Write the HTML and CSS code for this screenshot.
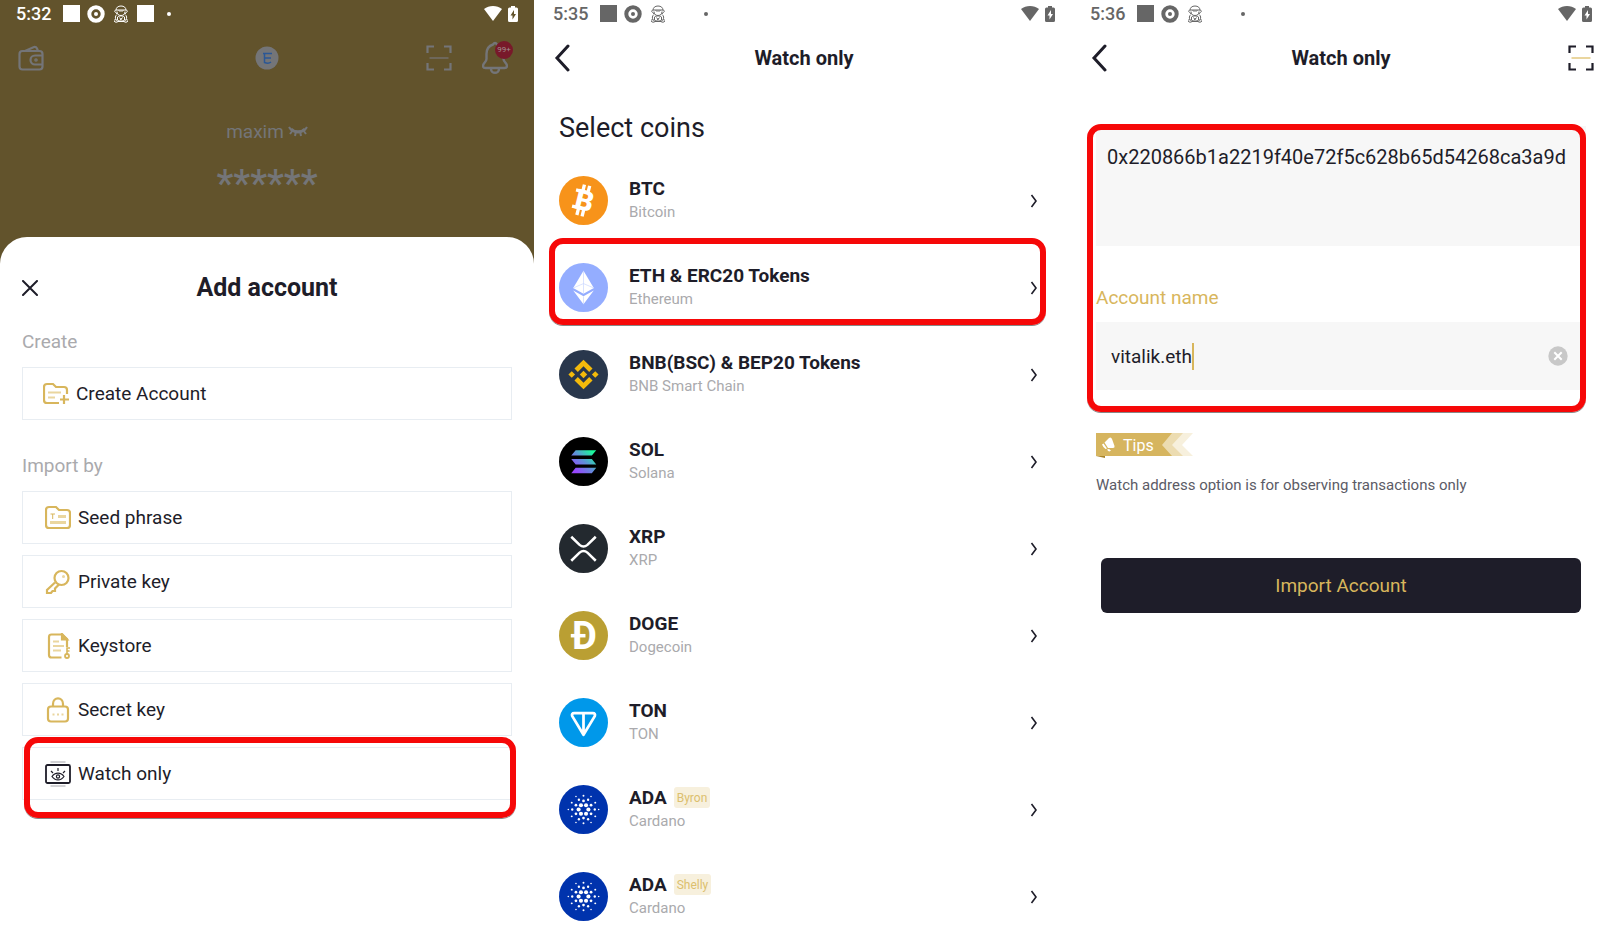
FILE: index.html
```html
<!DOCTYPE html>
<html lang="en">

<head>
    <meta charset="UTF-8">
    <meta name="viewport" content="width=device-width, initial-scale=1.0">
    <title>Watch only wallet</title>
    <link rel="stylesheet" href="styles.css">
</head>

<body>
    <!-- Shared icons -->
    <svg class="sprite" aria-hidden="true">
        <symbol id="i-ring" viewBox="0 0 18 18">
            <circle cx="9" cy="9" r="6.7" fill="none" stroke="currentColor" stroke-width="4" />
            <circle cx="9" cy="9" r="2" fill="currentColor" />
        </symbol>
        <symbol id="i-bear" viewBox="0 0 16 18">
            <g fill="none" stroke="currentColor" stroke-width="1">
                <path d="M3 5.500C3 2.500 5 1 8 1s5 1.500 5 4.500M1.500 6.500c0-1 1-1.500 2-1.500h9c1 0 2 .5 2 1.500M4 6.500C4 9 5.500 10.500 8 10.500S12 9 12 6.500M5.500 5l1.500 1.500 1-1 1 1L10.500 5M2 6.500l2 2.500M14 6.500L12 9" />
                <path d="M4 9.500C2 11 2 13 3 14.500M12 9.500c2 1.500 2 3.500 1 5M4.500 12c1-1.500 6-1.500 7 0v3c-1 1.500-6 1.500-7 0zM1 15.500c1-1.500 3-1 3.500 1M15 15.500c-1-1.500-3-1-3.500 1M1 16c1 1.500 3 1.500 4 .5h6c1 1 3 1 4-.5M6.500 12.500l1.500 2 1.500-2M7 15l2-1.500" />
            </g>
        </symbol>
        <symbol id="i-wifi" viewBox="0 0 18 15">
            <path d="M0 3C5-1 13-1 18 3L9 15z" fill="currentColor" />
        </symbol>
        <symbol id="i-battery" viewBox="0 0 10 16">
            <path d="M3 0h4v1.500h1.500Q10 1.500 10 3v11.500Q10 16 8.500 16h-7Q0 16 0 14.500V3q0-1.500 1.500-1.500H3z" fill="currentColor" />
            <path class="bolt" d="M6 4L2.500 9.500h2V13.500L8 8H6z" />
        </symbol>
        <symbol id="i-back" viewBox="0 0 16 28">
            <path d="M14 2L3 14l11 12" fill="none" stroke="currentColor" stroke-width="3" stroke-linecap="round" />
        </symbol>
        <symbol id="i-next" viewBox="0 0 8 14">
            <path d="M1.500 1l4.500 6-4.500 6" fill="none" stroke="currentColor" stroke-width="1.600" />
        </symbol>
        <symbol id="i-scan" viewBox="0 0 26 26">
            <path d="M1.500 8V1.500H8M18 1.500h6.500V8M24.500 18v6.500H18M8 24.500H1.500V18" fill="none" stroke="currentColor" stroke-width="2.200" />
            <path class="scan-line" d="M3.500 13h19" />
        </symbol>
        <symbol id="i-ada" viewBox="0 0 50 50">
            <circle cx="25" cy="25" r="25" fill="#0033ad" />
            <g fill="#fff">
                <circle cx="20" cy="25" r="2.100" /><circle cx="30" cy="25" r="2.100" />
                <circle cx="22.400" cy="20.600" r="2.100" /><circle cx="27.600" cy="20.600" r="2.100" />
                <circle cx="22.400" cy="29.400" r="2.100" /><circle cx="27.600" cy="29.400" r="2.100" />
                <circle cx="25" cy="16.200" r="1.400" /><circle cx="25" cy="33.800" r="1.400" />
                <circle cx="17.300" cy="20.600" r="1.400" /><circle cx="32.700" cy="20.600" r="1.400" />
                <circle cx="17.300" cy="29.400" r="1.400" /><circle cx="32.700" cy="29.400" r="1.400" />
                <circle cx="20.300" cy="15" r="1.200" /><circle cx="29.700" cy="15" r="1.200" />
                <circle cx="20.300" cy="35" r="1.200" /><circle cx="29.700" cy="35" r="1.200" />
                <circle cx="13.500" cy="25" r="1.200" /><circle cx="36.500" cy="25" r="1.200" />
                <circle cx="25" cy="11" r="1" /><circle cx="25" cy="39" r="1" />
                <circle cx="13" cy="18" r="1" /><circle cx="37" cy="18" r="1" />
                <circle cx="13" cy="32" r="1" /><circle cx="37" cy="32" r="1" />
                <circle cx="17.300" cy="11.800" r=".8" /><circle cx="32.700" cy="11.800" r=".8" />
                <circle cx="17.300" cy="38.200" r=".8" /><circle cx="32.700" cy="38.200" r=".8" />
                <circle cx="9.500" cy="25" r=".8" /><circle cx="40.500" cy="25" r=".8" />
            </g>
        </symbol>
    </svg>

    <main class="screens">
        <!-- Add account sheet -->
        <section class="screen home">
            <div class="status">
                <span class="time">5:32</span>
                <i class="block"></i>
                <svg class="ring"><use href="#i-ring" /></svg>
                <svg class="bear"><use href="#i-bear" /></svg>
                <i class="block extra"></i>
                <i class="dot"></i>
                <svg class="wifi"><use href="#i-wifi" /></svg>
                <svg class="battery"><use href="#i-battery" /></svg>
            </div>
            <div class="home-bar">
                <button class="icon-btn" aria-label="Wallets">
                    <svg width="26" height="26" viewBox="0 0 26 26" fill="none" stroke="currentColor" stroke-width="2.200">
                        <rect x="1.500" y="6" width="23" height="18.500" rx="3" />
                        <path d="M7 6l9-4q2-.5 3 1.500L20 6M24.500 10.500H17a4 4 0 0 0 0 9h7.500" />
                        <circle cx="18" cy="15" r=".7" />
                    </svg>
                </button>
                <svg class="chain" width="24" height="24" viewBox="0 0 24 24">
                    <circle cx="12" cy="12" r="11.500" fill="#747578" />
                    <path d="M8 7.500h9M9.500 8v8.500q4 1.500 6.500-.5M9 12h7" fill="none" stroke="#2a5796" stroke-width="1.500" />
                </svg>
                <div class="home-actions">
                    <button class="icon-btn" aria-label="Scan"><svg width="26" height="26"><use href="#i-scan" /></svg></button>
                    <button class="icon-btn bell" aria-label="Notifications">
                        <svg width="26" height="34" viewBox="0 0 26 34" fill="none" stroke="currentColor" stroke-width="2.400">
                            <path d="M11 3.500q2-3 4 0C20 5 21.500 9 21.500 13v5c0 3 3.500 4 3.500 7 0 1.500-1 2-2.500 2h-19C2 27 1 26.500 1 25c0-3 3.500-4 3.500-7v-5c0-4 1.500-8 6.500-9.500zM9 28c0 5 8 5 8 0" />
                        </svg>
                        <span class="count">99+</span>
                    </button>
                </div>
            </div>
            <div class="owner">
                <span>maxim</span>
                <svg width="20" height="12" viewBox="0 0 20 12" fill="none" stroke="currentColor" stroke-width="2">
                    <path d="M1 1c3 6 15 6 18 0M5 4L2 8M8 5l-1 5M12 5l1 5M15 4l3 4" />
                    <path d="M3 3c4 4 10 4 14 0" stroke-width="3" />
                </svg>
            </div>
            <div class="balance">******</div>

            <div class="sheet">
                <div class="sheet-head">
                    <button class="icon-btn" aria-label="Close">
                        <svg width="16" height="16" viewBox="0 0 16 16"><path d="M1 1l14 14M15 1L1 15" stroke="currentColor" stroke-width="2" stroke-linecap="round" /></svg>
                    </button>
                    <h2>Add account</h2>
                </div>
                <h3>Create</h3>
                <button class="option create">
                    <svg class="option-icon" viewBox="0 0 26 26" fill="none" stroke="currentColor" stroke-width="2.200">
                        <path d="M16 22H4q-3 0-3-3V6q0-3 3-3h6l3 3h8q3 0 3 3v4M21 14v9M17 18.500h9" />
                        <path class="soft" d="M5 11.500h13M5 16.500h7" />
                    </svg>
                    Create Account
                </button>
                <h3>Import by</h3>
                <div class="options">
                    <button class="option">
                        <svg class="option-icon" viewBox="0 0 26 26" fill="none" stroke="currentColor" stroke-width="2.200">
                            <path d="M4 2h7l3 3h8q3 0 3 3v12q0 3-3 3H4q-3 0-3-3V5q0-3 3-3z" />
                            <path class="soft" d="M13 11.500h8M5 17.500h16" stroke-width="2.800" />
                            <path d="M5.500 9h4.500M7.700 9v5" stroke-width="1" />
                        </svg>
                        Seed phrase
                    </button>
                    <button class="option">
                        <svg class="option-icon" viewBox="0 0 26 26" fill="none" stroke="currentColor" stroke-width="2.200">
                            <circle cx="16.500" cy="9" r="7" />
                            <path d="M10 13.500l-8 7.500V24h4l1.500-2H10v-2.500l4-4" />
                            <circle class="dim" cx="18.500" cy="7.500" r="1.500" />
                        </svg>
                        Private key
                    </button>
                    <button class="option">
                        <svg class="option-icon" viewBox="0 0 26 26" fill="none" stroke="currentColor" stroke-width="2.200">
                            <path d="M16.500 24.500H6.500q-2.500 0-2.500-2.500V4q0-2.500 2.500-2.500H17L22 6v8" />
                            <path d="M17 1v5.500h5z" fill="currentColor" />
                            <path class="soft" d="M8 8.500h6M8 13h11M8 17.500h8" />
                            <path d="M22 22v-7h3M22 18h2.500" stroke-width="1.600" />
                            <circle cx="22" cy="23" r="2" stroke-width="1.800" />
                        </svg>
                        Keystore
                    </button>
                    <button class="option">
                        <svg class="option-icon" viewBox="0 0 26 26" fill="none" stroke="currentColor" stroke-width="2.200">
                            <rect x="3" y="9.500" width="20" height="15" rx="3" />
                            <path d="M8 9.500V7c0-7.500 10-7.500 10 0v2.500" />
                            <path class="soft" d="M7.500 17.500h2M12 17.500h2M16.500 17.500h2" />
                        </svg>
                        Secret key
                    </button>
                    <button class="option marked">
                        <svg class="option-icon ink" viewBox="0 0 26 26" fill="none" stroke="currentColor" stroke-width="1.800">
                            <rect x="1" y="4" width="24" height="18" rx="1.500" />
                            <path d="M5.500 1h15M5.500 25h15" stroke="#c3c3c8" stroke-width="1.500" />
                            <path d="M7 15.500c3-4.500 9-4.500 12 0-3 4.500-9 4.500-12 0zM13 7v3M6 10l2 2M20 10l-2 2" stroke-width="1.200" />
                            <circle cx="13" cy="15.500" r="1.600" stroke-width="1.200" />
                        </svg>
                        Watch only
                    </button>
                </div>
            </div>
        </section>

        <!-- Coin list -->
        <section class="screen">
            <div class="status">
                <span class="time">5:35</span>
                <i class="block"></i>
                <svg class="ring"><use href="#i-ring" /></svg>
                <svg class="bear"><use href="#i-bear" /></svg>
                <i class="block extra"></i>
                <i class="dot"></i>
                <svg class="wifi"><use href="#i-wifi" /></svg>
                <svg class="battery"><use href="#i-battery" /></svg>
            </div>
            <header class="nav">
                <button class="icon-btn back" aria-label="Back"><svg width="16" height="28"><use href="#i-back" /></svg></button>
                <h1>Watch only</h1>
            </header>
            <h2 class="select-title">Select coins</h2>
            <div class="coins">
                <button class="coin">
                    <svg class="logo" viewBox="0 0 50 50">
                        <circle cx="25" cy="25" r="25" fill="#f7931a" />
                        <g transform="rotate(14 25 25)">
                            <text class="mark" x="26" y="35" font-size="29" text-anchor="middle">B</text>
                            <path d="M22 9v6M27.500 9v6M22 34v7M27.500 34v7M15 16.300h5M15 33.300h5" stroke="#fff" stroke-width="3.400" />
                        </g>
                    </svg>
                    <span class="coin-text"><b>BTC</b><small>Bitcoin</small></span>
                    <svg class="next"><use href="#i-next" /></svg>
                </button>
                <button class="coin marked">
                    <svg class="logo" viewBox="0 0 50 50">
                        <circle cx="25" cy="25" r="25" fill="#94adff" />
                        <path d="M25 8l10.500 17.500L25 31.500l-10.500-6z" fill="#fff" />
                        <path d="M14.500 28L25 34l10.500-6L25 42z" fill="#fff" />
                        <path d="M25 8v23.500M25 34v8M14.500 25.500L25 21l10.500 4.500" fill="none" stroke="#c9d6ff" stroke-width=".7" />
                    </svg>
                    <span class="coin-text"><b>ETH &amp; ERC20 Tokens</b><small>Ethereum</small></span>
                    <svg class="next"><use href="#i-next" /></svg>
                </button>
                <button class="coin">
                    <svg class="logo" viewBox="0 0 50 50">
                        <circle cx="25" cy="25" r="25" fill="#29374c" />
                        <path d="M25 10l9.200 9-3.400 3.400-5.800-5.700-5.800 5.700-3.400-3.400zM25 40l9.200-9-3.400-3.400-5.800 5.700-5.800-5.700-3.400 3.400zM13 21.600l3.400 3.400-3.400 3.400L9.600 25zM37 21.600l3.400 3.400-3.400 3.400-3.400-3.400zM25 21.200l3.800 3.800-3.800 3.800-3.800-3.800z" fill="#f3ba0b" />
                    </svg>
                    <span class="coin-text"><b>BNB(BSC) &amp; BEP20 Tokens</b><small>BNB Smart Chain</small></span>
                    <svg class="next"><use href="#i-next" /></svg>
                </button>
                <button class="coin">
                    <svg class="logo" viewBox="0 0 50 50">
                        <defs>
                            <linearGradient id="sol" gradientUnits="userSpaceOnUse" x1="14" y1="37" x2="37" y2="13">
                                <stop offset="0.100" stop-color="#9945ff" />
                                <stop offset="0.500" stop-color="#5f90d8" />
                                <stop offset="0.900" stop-color="#19fb9b" />
                            </linearGradient>
                        </defs>
                        <circle cx="25" cy="25" r="25" fill="#000" />
                        <path d="M17 13.500h21L33.500 19h-21zM12.500 22.500h21L38 28H17zM17 31.500h21L33.500 37h-21z" fill="url(#sol)" />
                    </svg>
                    <span class="coin-text"><b>SOL</b><small>Solana</small></span>
                    <svg class="next"><use href="#i-next" /></svg>
                </button>
                <button class="coin">
                    <svg class="logo" viewBox="0 0 50 50">
                        <circle cx="25" cy="25" r="25" fill="#23292f" />
                        <path d="M12.500 13l8.500 8.300q4 3.400 8 0L37.500 13M12.500 37.500l8.500-8.300q4-3.400 8 0l8.500 8.300" fill="none" stroke="#fff" stroke-width="2.600" />
                    </svg>
                    <span class="coin-text"><b>XRP</b><small>XRP</small></span>
                    <svg class="next"><use href="#i-next" /></svg>
                </button>
                <button class="coin">
                    <svg class="logo" viewBox="0 0 50 50">
                        <circle cx="25" cy="25" r="25" fill="#ba9f33" />
                        <text class="mark doge" x="26" y="39" font-size="39" text-anchor="middle">D</text>
                        <path d="M12 25.200h15" stroke="#fff" stroke-width="3.600" />
                    </svg>
                    <span class="coin-text"><b>DOGE</b><small>Dogecoin</small></span>
                    <svg class="next"><use href="#i-next" /></svg>
                </button>
                <button class="coin">
                    <svg class="logo" viewBox="0 0 50 50">
                        <circle cx="25" cy="25" r="25" fill="#0098ea" />
                        <path d="M15.500 15.500h19q3 0 2 3L25 37.500 13.500 18.500q-1-3 2-3zM25 16v20" fill="none" stroke="#fff" stroke-width="2.800" stroke-linejoin="round" />
                    </svg>
                    <span class="coin-text"><b>TON</b><small>TON</small></span>
                    <svg class="next"><use href="#i-next" /></svg>
                </button>
                <button class="coin">
                    <svg class="logo"><use href="#i-ada" /></svg>
                    <span class="coin-text"><b>ADA <em>Byron</em></b><small>Cardano</small></span>
                    <svg class="next"><use href="#i-next" /></svg>
                </button>
                <button class="coin">
                    <svg class="logo"><use href="#i-ada" /></svg>
                    <span class="coin-text"><b>ADA <em>Shelly</em></b><small>Cardano</small></span>
                    <svg class="next"><use href="#i-next" /></svg>
                </button>
            </div>
        </section>

        <!-- Import form -->
        <section class="screen">
            <div class="status">
                <span class="time">5:36</span>
                <i class="block"></i>
                <svg class="ring"><use href="#i-ring" /></svg>
                <svg class="bear"><use href="#i-bear" /></svg>
                <i class="block extra"></i>
                <i class="dot"></i>
                <svg class="wifi"><use href="#i-wifi" /></svg>
                <svg class="battery"><use href="#i-battery" /></svg>
            </div>
            <header class="nav">
                <button class="icon-btn back" aria-label="Back"><svg width="16" height="28"><use href="#i-back" /></svg></button>
                <h1>Watch only</h1>
                <button class="icon-btn scan" aria-label="Scan"><svg width="26" height="26"><use href="#i-scan" /></svg></button>
            </header>
            <form class="import-form">
                <div class="fields marked">
                    <textarea class="address" aria-label="Address" spellcheck="false">0x220866b1a2219f40e72f5c628b65d54268ca3a9d</textarea>
                    <label for="account-name">Account name</label>
                    <div class="name-field">
                        <input type="text" id="account-name" value="vitalik.eth">
                        <span class="caret"></span>
                        <button type="button" class="icon-btn clear" aria-label="Clear">
                            <svg width="20" height="20" viewBox="0 0 20 20"><circle cx="10" cy="10" r="9.700" fill="#c8c8c8" /><path d="M6.300 6.300l7.400 7.400M13.700 6.300l-7.400 7.400" stroke="#fff" stroke-width="2" /></svg>
                        </button>
                    </div>
                </div>
                <div class="tips">
                    <svg width="98" height="26" viewBox="0 0 98 26">
                        <path d="M0 0h97L86 12l11 11H0z" fill="#f7f0dd" />
                        <path d="M0 0h87L76 12l11 11H0z" fill="#ecdcb1" />
                        <path d="M0 0h76L66 12l10 11H0z" fill="#d6b55f" />
                        <path d="M0 23h9v2z" fill="#a8842c" />
                        <path d="M8.500 9.500L13 5q2-1.500 3 1l2.500 7q.5 2-1.500 2h-5zM6 11.500l1.500-1 3.500 5-1.500.5q-2-1-3.500-4.500zM11 16.500l2-.5 2 1.500-1.500 1q-1.500 0-2.500-2z" fill="#fff" />
                    </svg>
                    <span>Tips</span>
                </div>
                <p class="hint">Watch address option is for observing transactions only</p>
                <button type="button" class="submit">Import Account</button>
            </form>
        </section>
    </main>
</body>

</html>
```
FILE: styles.css
```css
* {
    margin: 0;
    padding: 0;
    box-sizing: border-box;
}

body {
    font-family: Roboto, "Liberation Sans", sans-serif;
    font-size: 19px;
    color: #1e1d29;
    background-color: #fff;
    overflow-x: hidden;
}

button,
input,
textarea {
    font: inherit;
    color: inherit;
    border: none;
    background: none;
}

button {
    cursor: pointer;
}

svg {
    display: block;
    flex: none;
}

.sprite {
    position: absolute;
    width: 0;
    height: 0;
}

/* Three phones side by side, the last one runs off the edge a little */
.screens {
    display: grid;
    grid-template-columns: repeat(3, 1fr);
    gap: 3px;
    width: calc(100% + 6px);
    min-height: 100vh;
}

.screen {
    --bolt: #fff;
    --scan-line: #ead69f;
    display: flex;
    flex-direction: column;
}

/* Status bar */
.status {
    display: flex;
    align-items: center;
    height: 27px;
    padding: 0 16px;
    color: #666;
}

.time {
    width: 47px;
    font-size: 18px;
    font-weight: 500;
    line-height: 20px;
}

.block {
    width: 17px;
    height: 17px;
    background-color: currentColor;
}

.block.extra {
    margin-left: 8px;
    background-color: #fff;
}

.ring {
    width: 18px;
    height: 18px;
    margin-left: 7px;
}

.bear {
    width: 16px;
    height: 18px;
    margin-left: 8px;
}

.dot {
    width: 4px;
    height: 4px;
    margin-left: 13px;
    border-radius: 50%;
    background-color: currentColor;
}

.wifi {
    width: 18px;
    height: 15px;
    margin-left: auto;
}

.battery {
    width: 10px;
    height: 16px;
    margin-left: 6px;
}

.bolt {
    fill: var(--bolt);
}

.scan-line {
    stroke: var(--scan-line);
    stroke-width: 2;
}

.icon-btn {
    display: block;
    color: inherit;
}

/* Home screen behind the sheet */
.home {
    --bolt: #62532c;
    --scan-line: #6e675a;
    background-color: #62532c;
    color: #747578;
}

.home .status {
    color: #fff;
}

.home-bar {
    display: grid;
    grid-template-columns: 1fr auto 1fr;
    align-items: center;
    height: 62px;
    padding: 0 18px;
}

.home-actions {
    display: flex;
    align-items: center;
    justify-content: flex-end;
    gap: 30px;
    padding-right: 8px;
}

.bell {
    position: relative;
}

.count {
    position: absolute;
    top: 0;
    right: -5px;
    width: 18px;
    height: 18px;
    border-radius: 50%;
    background-color: #78192a;
    color: #a09090;
    font-size: 8px;
    line-height: 17px;
    text-align: center;
}

.owner {
    display: flex;
    align-items: center;
    justify-content: center;
    gap: 4px;
    margin-top: 31px;
    line-height: 24px;
}

.balance {
    height: 93px;
    font-size: 38px;
    font-weight: 500;
    line-height: 80px;
    text-align: center;
}

.sheet {
    flex: 1;
    padding: 36px 22px 40px;
    border-radius: 27px 27px 0 0;
    background-color: #fff;
    color: #1e1d29;
}

.sheet-head {
    display: grid;
    grid-template-columns: 1fr auto 1fr;
    align-items: center;
}

.sheet h2 {
    font-size: 25px;
    font-weight: 700;
    line-height: 30px;
}

.sheet h3 {
    margin: 27px 0 13px;
    font-size: 19px;
    font-weight: 400;
    line-height: 24px;
    color: #aaaaad;
}

.options {
    display: grid;
    gap: 11px;
}

.option {
    display: flex;
    align-items: center;
    gap: 7px;
    width: 100%;
    height: 53px;
    padding: 0 22px;
    border: 1px solid #e8edf2;
}

.create {
    margin-bottom: 34px;
    padding: 0 20px;
}

.option-icon {
    width: 26px;
    height: 26px;
    color: #d8b65c;
}

.option-icon.ink {
    color: #1e1d29;
}

.soft {
    stroke: #ead69f;
}

.dim {
    fill: #ead69f;
    stroke: none;
}

/* Red frame round the step to follow */
.marked {
    position: relative;
}

.marked::after {
    content: "";
    position: absolute;
    inset: -11px -5px -19px 1px;
    border: 6px solid #f60808;
    border-radius: 14px;
    box-shadow: 0 1px 0 #888;
    pointer-events: none;
}

/* Page header */
.nav {
    display: grid;
    grid-template-columns: 1fr auto 1fr;
    align-items: center;
    height: 62px;
    padding: 0 14px;
}

.nav h1 {
    font-size: 20px;
    font-weight: 700;
}

.nav .back {
    padding-left: 3px;
}

.nav .scan {
    justify-self: end;
}

/* Coin list */
.select-title {
    margin-top: 23px;
    padding-left: 22px;
    font-size: 27px;
    font-weight: 400;
    line-height: 32px;
}

.coins {
    margin-top: 13px;
}

.coin {
    display: flex;
    align-items: center;
    width: 100%;
    height: 87px;
    padding: 0 33px 0 22px;
    text-align: left;
}

.logo {
    width: 49px;
    height: 49px;
    margin-right: 21px;
}

.mark {
    font-family: Roboto, sans-serif;
    font-weight: 900;
    fill: #fff;
}

.mark.doge {
    font-weight: 700;
}

.coin-text b {
    display: flex;
    align-items: center;
    gap: 7px;
    height: 24px;
    font-size: 19px;
    font-weight: 700;
}

.coin-text small {
    display: block;
    padding-bottom: 1px;
    font-size: 15px;
    line-height: 23px;
    color: #aaaaad;
}

.coin-text em {
    height: 21px;
    padding: 0 3px;
    border-radius: 3px;
    background-color: #f7f0dd;
    color: #dcbf6e;
    font-size: 12px;
    font-style: normal;
    font-weight: 400;
    line-height: 22px;
}

.next {
    width: 8px;
    height: 14px;
    margin-left: auto;
}

.coin.marked::after {
    inset: -6px 25px 6px 12px;
}

/* Import form */
.import-form {
    padding: 37px 22px 0;
}

.fields.marked::after {
    inset: -2px 0 -22px -9px;
}

.address {
    display: block;
    width: 100%;
    height: 120px;
    padding: 19px 11px;
    background-color: #f7f7f7;
    font-size: 20px;
    line-height: 24px;
    resize: none;
    outline: none;
}

.fields label {
    display: block;
    margin: 40px 0 12px;
    line-height: 24px;
    color: #d8b65c;
}

.name-field {
    position: relative;
    display: flex;
    align-items: center;
    height: 68px;
    padding: 0 18px 0 15px;
    background-color: #f7f7f7;
}

.name-field input {
    flex: 1;
    min-width: 0;
    outline: none;
}

.caret {
    position: absolute;
    left: 96px;
    width: 2px;
    height: 27px;
    background-color: #d8b65c;
}

.tips {
    position: relative;
    margin-top: 43px;
}

.tips span {
    position: absolute;
    top: 0;
    left: 27px;
    font-size: 16px;
    line-height: 25px;
    color: #fff;
}

.hint {
    margin-top: 14px;
    font-size: 15px;
    line-height: 24px;
    color: #5b5b66;
}

.submit {
    display: block;
    width: calc(100% - 10px);
    height: 55px;
    margin: 61px 5px 0;
    border-radius: 6px;
    background-color: #1e1d29;
    color: #d8b65c;
}
```
